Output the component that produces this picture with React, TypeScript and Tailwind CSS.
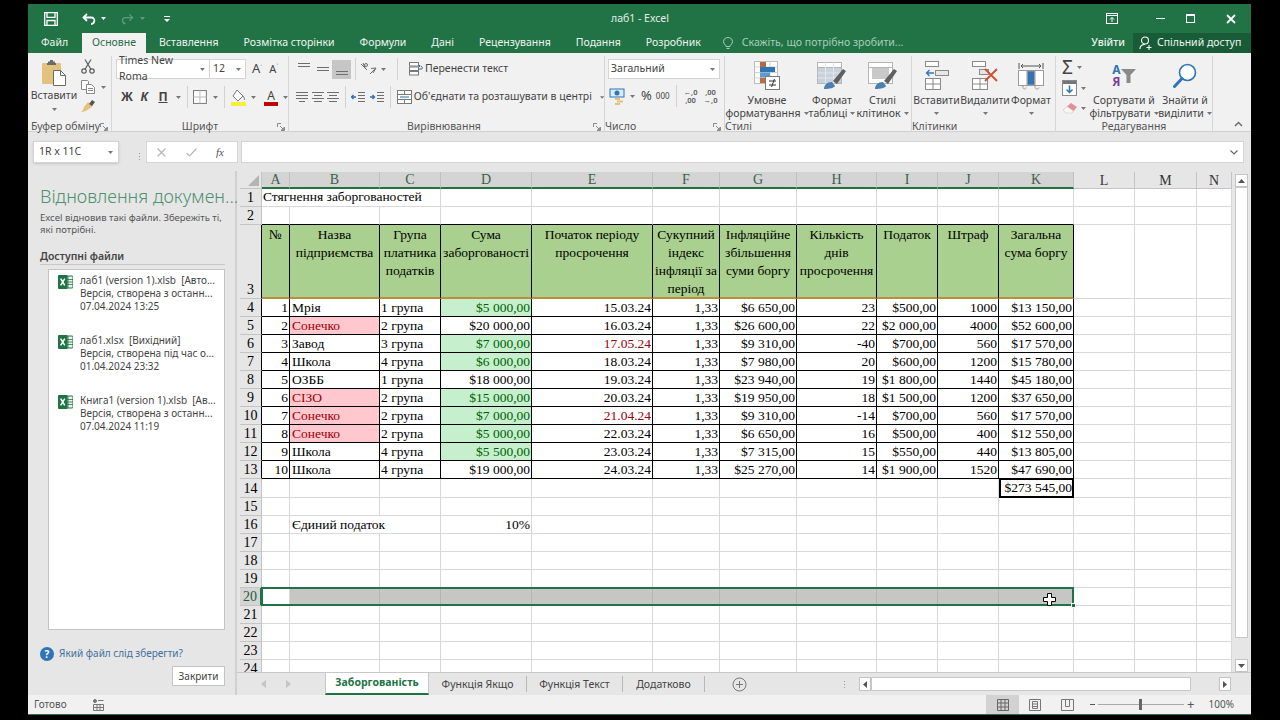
import type { ReactNode } from "react";

const ui = "font-['Noto_Sans',sans-serif]";
const serif = "font-['Liberation_Serif',serif]";

const Caret = ({ className = "" }: { className?: string }) => (
  <svg width="5" height="3" viewBox="0 0 5 3" className={className}>
    <path d="M0 0h5L2.5 3z" fill="#777" />
  </svg>
);

const Launcher = () => (
  <svg width="8" height="8" viewBox="0 0 8 8" fill="none" stroke="#8a8a8a">
    <path d="M.5 4V.5H4M7.5 4v3.5H4M3 3l3.5 3.5M6.5 4.5v2h-2" />
  </svg>
);

const Sep = ({ h = "h-[22px]", mx = "mx-0" }: { h?: string; mx?: string }) => <div className={`w-px bg-[#d2d2d2] ${h} ${mx}`} />;

function Lines({ rows }: { rows: [number, number, string?][] }) {
  return (
    <svg width="14" height="14" viewBox="0 0 14 14" fill="none" strokeWidth="1">
      {rows.map(([y, x, c], i) => (
        <path key={i} d={`M${x} ${y + 0.5}H${14 - (c === "r" ? 0 : x)}`} stroke="#6e6e6e" />
      ))}
    </svg>
  );
}

function ExcelIcon() {
  return (
    <svg width="15" height="14" viewBox="0 0 15 14">
      <rect x="5" y="1" width="10" height="12" rx="1" fill="#e8f3ec" stroke="#217346" />
      <path d="M10 1v12M5 4.5h10M5 7h10M5 9.5h10" stroke="#217346" strokeWidth=".8" />
      <rect x="0" y="0" width="9.5" height="14" rx="1" fill="#217346" />
      <path d="M2.6 3.6l4.2 6.8M6.8 3.6l-4.2 6.8" stroke="#fff" strokeWidth="1.5" />
    </svg>
  );
}

function Paste() {
  return (
    <svg width="25" height="26" viewBox="0 0 25 26">
      <rect x="0" y="3" width="19" height="21" rx="1" fill="#e3c27f" />
      <path d="M6 3V1.5h2V0h3v1.5h2V3h1v2H5V3z" fill="#6a6a6a" />
      <path d="M11.5 10.5h7l5 5v10h-12z" fill="#fff" stroke="#6a6a6a" />
      <path d="M18.5 10.5v5h5" fill="none" stroke="#6a6a6a" />
    </svg>
  );
}

function Scissors() {
  return (
    <svg width="14" height="15" viewBox="0 0 14 15" fill="none" stroke="#5c5c5c" strokeWidth="1.2">
      <circle cx="3" cy="12" r="2.2" />
      <circle cx="11" cy="12" r="2.2" />
      <path d="M4.2 10L10 .5M9.8 10L4 .5" />
    </svg>
  );
}

function CopyIcon() {
  return (
    <svg width="14" height="14" viewBox="0 0 14 14" fill="#fff" stroke="#8a8a8a">
      <path d="M.5.5h6l1 1v8h-7z" />
      <path d="M5.5 4.5h5l3 3v6h-8z" />
      <path d="M7 8.5h5M7 10.5h5" />
    </svg>
  );
}

function Brush() {
  return (
    <svg width="14" height="13" viewBox="0 0 14 13">
      <path d="M7 2l5 4-4 3-1 .5C5 11 2 12.500 0 12c2-1 2-3 3-5z" fill="#e3c27f" />
      <path d="M8 4l3-4 3 2-3 4z" fill="#555" />
    </svg>
  );
}

function FillBucket() {
  return (
    <svg width="16" height="17" viewBox="0 0 16 17">
      <path d="M6 1l6 6-5 5-5-5z" fill="#fff" stroke="#777" />
      <path d="M12 7c1 1.500 2 3 1.500 4" stroke="#777" fill="none" />
      <rect x="0" y="13" width="15" height="4" fill="#f5ee3a" />
    </svg>
  );
}

function Orientation() {
  return (
    <svg width="17" height="14" viewBox="0 0 17 14" fill="none" stroke="#6e6e6e">
      <path d="M1 2l6 6M3 1l2 5M10 12l6-6M13 11l3-5-5 .5" />
      <circle cx="6" cy="3" r="1.500" />
    </svg>
  );
}

function WrapIcon() {
  return (
    <svg width="14" height="14" viewBox="0 0 14 14" fill="#fff" stroke="#7a7a7a">
      <rect x=".5" y=".5" width="9" height="3.500" />
      <rect x=".5" y="5" width="9" height="3.500" />
      <rect x=".5" y="9.500" width="9" height="3.500" />
      <path d="M9 7h3.500c1.500 0 1-3 -1-3M11 3l-1 1 1 1" stroke="#2a6fa8" fill="none" />
    </svg>
  );
}

function MergeIcon() {
  return (
    <svg width="15" height="14" viewBox="0 0 15 14" fill="#fff" stroke="#7a7a7a">
      <rect x=".5" y=".5" width="14" height="13" />
      <path d="M.5 4.500h14M.5 9.500h14M7.500.5v4M7.500 9.500v4" />
      <path d="M3 7h9" stroke="#2a6fa8" />
    </svg>
  );
}

function Indent({ flip = false }: { flip?: boolean }) {
  return (
    <svg width="14" height="13" viewBox="0 0 14 13" fill="none" stroke="#6e6e6e">
      <path d="M7 1.500h7M7 4.500h7M7 7.500h7M7 10.500h7" />
      <path d={flip ? "M0 6h4M2.500 4l2 2-2 2" : "M5 6H1M2.500 4l-2 2 2 2"} stroke="#2a6fa8" strokeWidth="1.300" />
    </svg>
  );
}

function Currency() {
  return (
    <svg width="17" height="17" viewBox="0 0 17 17">
      <rect x="1" y="1" width="14" height="8" fill="#dcecf7" stroke="#2f75b5" />
      <circle cx="8" cy="5" r="2.500" fill="#2f75b5" />
      <rect x="6" y="10" width="5" height="2" fill="#e3c27f" />
      <rect x="8" y="12.500" width="6" height="2" fill="#e3c27f" />
      <rect x="6" y="15" width="5" height="2" fill="#e3c27f" />
    </svg>
  );
}

function CondFormat() {
  return (
    <svg width="26" height="29" viewBox="0 0 26 29">
      <rect x=".5" y=".5" width="23" height="22" fill="#fff" stroke="#bcbcbc" />
      <path d="M.5 6h23M.5 11.500h23M.5 17h23M8 .5v22M16 .5v22" stroke="#d0d0d0" />
      <rect x="6" y="1" width="6" height="5" fill="#b9663d" />
      <rect x="6" y="6" width="15" height="5" fill="#2f75b5" />
      <rect x="6" y="11.500" width="10" height="5" fill="#5d9ad2" />
      <rect x="6" y="17" width="5" height="5" fill="#c4693b" />
      <rect x="11.500" y="15.500" width="14" height="13" fill="#fff" stroke="#7a7a7a" />
      <path d="M15 20h7M15 24h7M20.500 18l-3 8" stroke="#333" />
    </svg>
  );
}

function Roller({ full }: { full: boolean }) {
  return (
    <svg width="30" height="28" viewBox="0 0 30 28">
      <rect x=".5" y=".5" width="24" height="21" fill="#fff" stroke="#b5b5b5" />
      <path d="M.5 5.500h24" stroke="#b5b5b5" />
      {full ? (
        <>
          <rect x="1" y="6" width="23" height="15" fill="#c8d2de" />
          <path d="M.5 11h24M.5 16h24M8.500.5v21M16.500.5v21" stroke="#e6e6e6" />
        </>
      ) : (
        <rect x="4" y="6" width="17" height="11" fill="#c9c9c9" />
      )}
      <path d="M7 27c0-4 3-7 8-7l3 4c-1 2-5 3-11 3z" fill="#4a7fb2" />
      <path d="M16 19L26 7l3 2-9 13z" fill="#5f5f5f" />
    </svg>
  );
}

function InsertCells() {
  return (
    <svg width="24" height="29" viewBox="0 0 24 29" fill="#fff" stroke="#8a8a8a">
      <rect x=".5" y=".5" width="13" height="5" />
      <rect x="10.500" y="9.500" width="13" height="5" fill="#e6e6e6" />
      <path d="M9 12H1.500M4.500 9l-3 3 3 3" fill="none" stroke="#2f75b5" strokeWidth="1.300" />
      <rect x=".5" y="17.500" width="15" height="11" />
      <path d="M.5 23h15M8 17.500v11" />
    </svg>
  );
}

function DeleteCells() {
  return (
    <svg width="26" height="29" viewBox="0 0 26 29" fill="#fff" stroke="#8a8a8a">
      <rect x=".5" y=".5" width="13" height="5" />
      <rect x="7.500" y="8.500" width="9" height="5" fill="#e6e6e6" />
      <rect x=".5" y="17.500" width="15" height="11" />
      <path d="M.5 23h15M8 17.500v11" />
      <path d="M13 8l12 12M25 8L13 20" stroke="#d0512c" strokeWidth="1.800" fill="none" />
    </svg>
  );
}

function FormatCells() {
  return (
    <svg width="26" height="28" viewBox="0 0 26 28" fill="none" stroke="#9a9a9a">
      <path d="M1 1v6M25 1v6M3 4h20M3 4l2-2M3 4l2 2M23 4l-2-2M23 4l-2 2" stroke="#555" />
      <rect x=".5" y="8.500" width="25" height="15" fill="#fff" />
      <path d="M9 8.500v15M17 8.500v15" />
      <rect x="9.500" y="9" width="7" height="14" fill="#2f75b5" />
      <path d="M5 23.500v2c0 2 3 2 3 0M17 23.500v2c0 2 4 2 4 0" />
    </svg>
  );
}

function FillDown() {
  return (
    <svg width="15" height="16" viewBox="0 0 15 16">
      <rect x=".5" y=".5" width="14" height="15" fill="#fff" stroke="#8a8a8a" />
      <rect x="1" y="1" width="13" height="3" fill="#767676" />
      <path d="M7.500 5.500v7M4.500 9.500l3 3 3-3" fill="none" stroke="#2f75b5" strokeWidth="1.500" />
    </svg>
  );
}

function Eraser() {
  return (
    <svg width="16" height="13" viewBox="0 0 16 13">
      <path d="M9 1l6 4-5 6H4L1 8z" fill="#e58f94" />
      <path d="M1 8l3 3h6l1.500-2L5 4.500z" fill="#f7f7f7" stroke="#c8c8c8" strokeWidth=".5" />
    </svg>
  );
}

function Funnel() {
  return (
    <svg width="15" height="14" viewBox="0 0 15 14">
      <path d="M0 0h15L9.500 6v8h-4V6z" fill="#8a8a8a" />
    </svg>
  );
}

function Magnifier() {
  return (
    <svg width="24" height="25" viewBox="0 0 24 25" fill="none">
      <circle cx="14.500" cy="9.500" r="8" fill="#fff" stroke="#2f75b5" strokeWidth="1.600" />
      <path d="M9 15.500l-7.500 8" stroke="#2f75b5" strokeWidth="3" strokeLinecap="round" />
    </svg>
  );
}

function BigButton({ w, icon, lines, caretInline = false, gap = "" }: { w: string; icon: ReactNode; lines: string[]; caretInline?: boolean; gap?: string }) {
  return (
    <div className={`flex flex-col items-center text-[10.5px] leading-[13px] text-[#444] ${w} ${gap}`}>
      <div className="flex h-[33px] items-center justify-center">{icon}</div>
      <div className="mt-[2px] whitespace-nowrap">{lines[0]}</div>
      {caretInline ? (
        <div className="flex items-center gap-[3px] whitespace-nowrap">
          {lines[1]}
          <Caret />
        </div>
      ) : (
        <Caret className="mt-[5px]" />
      )}
    </div>
  );
}

function Group({ w, label, launcher = false, labelCls = "justify-center", children }: { w: string; label: string; launcher?: boolean; labelCls?: string; children: ReactNode }) {
  return (
    <div className={`relative flex h-[76px] shrink-0 flex-col self-start border-r border-[#d6d6d6] ${w}`}>
      <div className="flex h-[64px] pt-[3px]">{children}</div>
      <div className={`flex items-center text-[10.5px] leading-[12px] text-[#555] ${labelCls}`}>
        <span>{label}</span>
      </div>
      {launcher && (
        <div className="absolute right-[3px] bottom-[1px]">
          <Launcher />
        </div>
      )}
    </div>
  );
}

function Ribbon() {
  return (
    <div className={`flex h-[79px] border-b border-[#d0d0d0] bg-[#f1f1f1] pt-[3px] ${ui}`}>
      <Group w="w-[84px]" label="Буфер обміну" launcher labelCls="pl-[3px]">
        <div className="flex w-[52px] flex-col items-center">
          <div className="mt-[1px]"><Paste /></div>
          <div className="mt-[3px] text-[10.5px] leading-[13px] text-[#444]">Вставити</div>
          <Caret className="mt-[6px]" />
        </div>
        <div className="flex flex-col gap-[6px] pl-[1px]">
          <Scissors />
          <div className="flex items-center gap-[6px]"><CopyIcon /><Caret /></div>
          <Brush />
        </div>
      </Group>

      <Group w="w-[177px]" label="Шрифт" launcher>
        <div className="flex w-full flex-col pl-[4px]">
          <div className="flex h-[20px] items-center">
            <div className="flex h-[20px] w-[94px] items-center justify-between border border-[#d4d4d4] bg-white pl-[2px] pr-[4px] text-[10.5px] text-[#444]">
              Times New Roma <Caret />
            </div>
            <div className="flex h-[20px] w-[36px] items-center justify-between border border-l-0 border-[#d4d4d4] bg-white pl-[3px] pr-[4px] text-[10.5px] text-[#444]">
              12 <Caret />
            </div>
            <span className={`ml-[6px] text-[13px] text-[#444] ${ui}`}>A<sup className="text-[7px] text-[#2f75b5]">˄</sup></span>
            <span className={`ml-[7px] text-[11px] text-[#444] ${ui}`}>A<sup className="text-[7px] text-[#2f75b5]">˅</sup></span>
          </div>
          <div className="mt-[9px] flex h-[18px] items-center text-[12px] font-bold text-[#444]">
            <span className="w-[19px] pl-[3px] text-center">Ж</span>
            <span className="w-[19px] text-center italic">К</span>
            <span className="w-[19px] text-center underline">П</span>
            <Caret className="ml-[4px]" />
            <Sep mx="ml-[6px]" />
            <svg width="14" height="14" viewBox="0 0 14 14" fill="#fff" stroke="#777" className="ml-[5px]">
              <rect x=".5" y=".5" width="13" height="13" />
              <path d="M7 .5v13M.5 7h13" stroke="#bbb" />
            </svg>
            <Caret className="ml-[6px]" />
            <Sep mx="ml-[6px]" />
            <div className="ml-[6px]"><FillBucket /></div>
            <Caret className="ml-[4px]" />
            <div className="ml-[8px] flex w-[14px] flex-col items-center">
              <span className="text-[12px] font-normal leading-[13px] underline-none">A</span>
              <span className="h-[4px] w-[14px] bg-[#c00000]" />
            </div>
            <Caret className="ml-[5px]" />
          </div>
        </div>
      </Group>

      <Group w="w-[316px]" label="Вирівнювання" launcher labelCls="pl-[118px]">
        <div className="flex w-full flex-col pl-[5px] text-[10.5px] text-[#444]">
          <div className="flex h-[20px] items-center">
            <div className="flex w-[19px] justify-center"><Lines rows={[[1, 1], [4, 1]]} /></div>
            <div className="flex w-[19px] justify-center"><Lines rows={[[5, 1], [8, 1]]} /></div>
            <div className="flex h-[19px] w-[19px] items-center justify-center bg-[#c6c6c6]"><Lines rows={[[9, 1], [12, 1]]} /></div>
            <Sep mx="ml-[4px]" />
            <div className="ml-[4px]"><Orientation /></div>
            <Caret className="ml-[4px]" />
            <Sep mx="ml-[11px]" />
            <div className="ml-[11px]"><WrapIcon /></div>
            <span className="ml-[2px]">Перенести текст</span>
          </div>
          <div className="mt-[8px] flex h-[20px] items-center">
            <div className="flex w-[19px] justify-center"><Lines rows={[[2, 1], [5, 1], [8, 1], [11, 4]]} /></div>
            <div className="flex w-[19px] justify-center"><Lines rows={[[2, 1], [5, 3], [8, 1], [11, 3]]} /></div>
            <div className="flex w-[19px] justify-center"><Lines rows={[[2, 1], [5, 3], [8, 1], [11, 3]]} /></div>
            <Sep mx="ml-[4px]" />
            <div className="ml-[5px]"><Indent /></div>
            <div className="ml-[5px]"><Indent flip /></div>
            <Sep mx="ml-[6px]" />
            <div className="ml-[6px]"><MergeIcon /></div>
            <span className="ml-[2px] whitespace-nowrap">Об'єднати та розташувати в центрі</span>
            <Caret className="ml-[8px]" />
          </div>
        </div>
      </Group>

      <Group w="w-[120px]" label="Число" launcher labelCls="pr-[16px]">
        <div className="flex w-full flex-col pl-[3px] text-[#444]">
          <div className="flex h-[20px] w-[112px] items-center justify-between border border-[#d4d4d4] bg-white pl-[2px] pr-[4px] text-[10.5px]">
            Загальний <Caret />
          </div>
          <div className="mt-[7px] flex h-[20px] items-center">
            <div className="ml-[1px]"><Currency /></div>
            <Caret className="ml-[4px]" />
            <span className="ml-[6px] text-[13px]">%</span>
            <span className="ml-[4px] text-[8px]">000</span>
            <Sep mx="ml-[6px]" />
            <span className="ml-[4px] w-[20px] text-center text-[7.5px] font-semibold leading-[8px] text-[#555]">←,0<br />,00</span>
            <span className="w-[20px] text-center text-[7.5px] font-semibold leading-[8px] text-[#555]">,00<br />→,0</span>
          </div>
        </div>
      </Group>

      <Group w="w-[187px]" label="Стилі" labelCls="pr-[4px]">
        <BigButton w="w-[86px] -ml-[1px]" icon={<CondFormat />} lines={["Умовне", "форматування"]} caretInline />
        <BigButton w="w-[44px]" icon={<Roller full />} lines={["Формат", "таблиці"]} caretInline />
        <BigButton w="w-[57px]" icon={<Roller full={false} />} lines={["Стилі", "клітинок"]} caretInline />
      </Group>

      <Group w="w-[144px]" label="Клітинки" labelCls="pr-[0px]">
        <BigButton w="w-[49px]" icon={<InsertCells />} lines={["Вставити"]} />
        <BigButton w="w-[48px]" icon={<DeleteCells />} lines={["Видалити"]} />
        <BigButton w="w-[44px]" icon={<FormatCells />} lines={["Формат"]} />
      </Group>

      <Group w="w-[157px]" label="Редагування">
        <div className="flex w-[32px] flex-col items-start gap-[4px] pl-[6px]">
          <div className="flex h-[17px] items-center gap-[4px]"><span className="text-[19px] leading-[17px] text-[#444]">Σ</span><Caret /></div>
          <div className="flex h-[16px] items-center gap-[4px]"><FillDown /><Caret /></div>
          <div className="flex h-[16px] items-center gap-[3px]"><Eraser /><Caret /></div>
        </div>
        <BigButton
          w="w-[68px] ml-[2px]"
          icon={
            <div className="flex items-center">
              <div className="flex flex-col text-[12px] font-bold leading-[12px]">
                <span className="text-[#2f75b5]">A</span>
                <span className="text-[#7a3f98]">Я</span>
              </div>
              <Funnel />
            </div>
          }
          lines={["Сортувати й", "фільтрувати"]}
          caretInline
        />
        <BigButton w="w-[54px]" icon={<Magnifier />} lines={["Знайти й", "виділити"]} caretInline />
      </Group>

      <div className="flex flex-1 items-end justify-end pb-[4px] pr-[8px]">
        <svg width="9" height="6" viewBox="0 0 9 6" fill="none" stroke="#666" strokeWidth="1.400"><path d="M1 5l3.500-3.500L8 5" /></svg>
      </div>
    </div>
  );
}

function TitleBar() {
  return (
    <div className={`relative flex h-[29px] items-center bg-[#217346] text-white ${ui}`}>
      <svg width="14" height="14" viewBox="0 0 14 14" fill="none" stroke="#fff" strokeWidth="1.300" className="ml-[16px]">
        <path d="M.7.7h12.600v12.600H.7zM3 .7v4.600h8V.7M3 13.300V8.500h8v4.800" />
      </svg>
      <svg width="14" height="12" viewBox="0 0 14 12" fill="none" stroke="#fff" strokeWidth="1.800" className="ml-[24px]">
        <path d="M5 1L1.500 4.500 5 8M1.500 4.500H9c5 0 4 6.500 0 6.500" />
      </svg>
      <Caret className="ml-[5px] [&>path]:fill-white" />
      <svg width="13" height="12" viewBox="0 0 14 12" fill="none" stroke="#5e9c7c" strokeWidth="1.400" className="ml-[15px]">
        <path d="M9 1l3.500 3.500L9 8M12.500 4.500H5c-5 0-4 6.500 0 6.500" />
      </svg>
      <Caret className="ml-[6px] [&>path]:fill-[#5e9c7c]" />
      <svg width="6" height="6" viewBox="0 0 6 6" className="ml-[19px]" fill="#fff">
        <path d="M0 0h6v1H0zM0 3h6L3 6z" />
      </svg>
      <span className="absolute left-[583px] top-[8px] text-[10.5px] leading-[13px] text-[#e2efe8]">лаб1 - Excel</span>
      <div className="ml-auto flex items-center">
        <svg width="12" height="11" viewBox="0 0 12 11" fill="none" stroke="#fff"><rect x=".5" y=".5" width="11" height="10" /><path d="M.5 2.500h11M6 9V4.500M4 6.500l2-2 2 2" /></svg>
        <span className="ml-[38px] h-[1.500px] w-[9px] bg-white" />
        <span className="ml-[21px] h-[9px] w-[9px] border border-t-2 border-white" />
        <svg width="10" height="10" viewBox="0 0 10 10" stroke="#fff" strokeWidth="1.800" className="ml-[31px] mr-[15px]"><path d="M1 1l8 8M9 1l-8 8" /></svg>
      </div>
    </div>
  );
}

function TabRow() {
  const tabs = ["Вставлення", "Розмітка сторінки", "Формули", "Дані", "Рецензування", "Подання", "Розробник"];
  return (
    <div className={`flex h-[20px] items-center bg-[#217346] text-[10.5px] text-[#eef5f0] ${ui}`}>
      <span className="w-[54px] pl-[13px]">Файл</span>
      <span className="flex h-[20px] w-[64px] items-center justify-center bg-[#f1f1f1] text-[#2b6c48]">Основне</span>
      <div className="ml-[13px] flex gap-[25px]">
        {tabs.map((t) => (
          <span key={t}>{t}</span>
        ))}
      </div>
      <svg width="10" height="13" viewBox="0 0 10 13" fill="none" stroke="#a8cdb8" className="ml-[22px]">
        <path d="M3 9.500C2.500 7.500.5 7 .5 4.500a4.500 4 0 0 1 9 0C9.500 7 7.500 7.500 7 9.500zM3.500 11.500h3" />
      </svg>
      <span className="ml-[9px] text-[#a8cdb8]">Скажіть, що потрібно зробити...</span>
      <span className="ml-auto font-medium">Увійти</span>
      <div className="ml-[8px] flex h-[20px] w-[118px] items-center bg-[#185c37] pl-[6px]">
        <svg width="15" height="14" viewBox="0 0 15 14" fill="none" stroke="#fff" strokeWidth="1.100">
          <circle cx="6" cy="4.500" r="3.500" />
          <path d="M1 13c0-3 2-4.500 5-4.500M10 9v5M7.500 11.500h5" />
        </svg>
        <span className="ml-[3px] whitespace-nowrap">Спільний доступ</span>
      </div>
    </div>
  );
}

function FormulaBar() {
  return (
    <div className={`flex h-[39px] bg-[#e6e6e6] pt-[9px] ${ui}`}>
      <div className="ml-[5px] flex h-[22px] w-[86px] items-center justify-between border border-[#d4d4d4] bg-white pl-[5px] pr-[5px] text-[10.5px] text-[#444] shadow-sm">
        1R x 11C <Caret />
      </div>
      <div className="ml-[13px] flex w-[14px] flex-col items-center justify-center gap-[2px]">
        <span className="h-px w-px bg-[#999]" />
        <span className="h-px w-px bg-[#999]" />
        <span className="h-px w-px bg-[#999]" />
      </div>
      <div className="flex h-[22px] w-[92px] items-center border border-[#d4d4d4] bg-white pl-[10px]">
        <svg width="9" height="9" viewBox="0 0 9 9" stroke="#b5b5b5" strokeWidth="1.100"><path d="M.5.5l8 8M8.500.5l-8 8" /></svg>
        <svg width="11" height="9" viewBox="0 0 11 9" stroke="#b5b5b5" strokeWidth="1.200" fill="none" className="ml-[20px]"><path d="M.5 5l3 3 7-7.500" /></svg>
        <span className={`ml-[19px] text-[11px] italic text-[#555] ${serif}`}>fx</span>
      </div>
      <div className="ml-[3px] flex h-[22px] w-[1003px] items-center justify-end border border-[#d4d4d4] bg-white pr-[5px]">
        <svg width="8" height="5" viewBox="0 0 8 5" fill="none" stroke="#666" strokeWidth="1.200"><path d="M.5.5L4 4 7.500.5" /></svg>
      </div>
    </div>
  );
}

const files = [
  ["лаб1 (version 1).xlsb  [Авто...", "Версія, створена з останн...", "07.04.2024 13:25"],
  ["лаб1.xlsx  [Вихідний]", "Версія, створена під час о...", "01.04.2024 23:32"],
  ["Книга1 (version 1).xlsb  [Ав...", "Версія, створена з останн...", "07.04.2024 11:19"],
];

function RecoveryPanel() {
  return (
    <div className={`flex w-[209px] shrink-0 flex-col border-r-2 border-[#d0d0d0] bg-[#e6e6e6] pl-[12px] pr-[10px] pt-[13px] ${ui}`}>
      <div className="whitespace-nowrap text-[18px] font-light leading-[24px] text-[#4f9070]">Відновлення докумен...</div>
      <div className="mt-[4px] text-[9.5px] leading-[12px] text-[#555]">Excel відновив такі файли.  Збережіть ті, які потрібні.</div>
      <div className="mt-[14px] border-b border-[#c8c8c8] pb-[1px] text-[10.5px] font-semibold leading-[13px] text-[#444]">Доступні файли</div>
      <div className="ml-[8px] mt-[4px] h-[361px] w-[177px] border border-[#c4c4c4] bg-white pt-[4px]">
        {files.map((f) => (
          <div key={f[0]} className="flex h-[60px] pl-[9px]">
            <div className="pt-[1px]"><ExcelIcon /></div>
            <div className="ml-[7px] whitespace-pre text-[10px] leading-[13px] text-[#444]">
              {f.map((l) => (
                <div key={l}>{l}</div>
              ))}
            </div>
          </div>
        ))}
      </div>
      <div className="mt-[16px] flex items-center">
        <span className="flex h-[14px] w-[14px] items-center justify-center rounded-full bg-[#2f75b5] text-[10px] font-bold leading-none text-white">?</span>
        <span className="ml-[5px] text-[10px] text-[#41719c]">Який файл слід зберегти?</span>
      </div>
      <div className="ml-auto mt-[5px] flex h-[20px] w-[53px] items-center justify-center border border-[#c4c4c4] bg-white text-[10px] text-[#444]">Закрити</div>
    </div>
  );
}

type Row = { n: string; name: string; bad?: boolean; group: string; sum: string; good?: boolean; date: string; late?: boolean; infl: string; days: string; tax: string; fine: string; total: string };

const data: Row[] = [
  { n: "1", name: "Мрія", group: "1 група", sum: "$5 000,00", good: true, date: "15.03.24", infl: "$6 650,00", days: "23", tax: "$500,00", fine: "1000", total: "$13 150,00" },
  { n: "2", name: "Сонечко", bad: true, group: "2 група", sum: "$20 000,00", date: "16.03.24", infl: "$26 600,00", days: "22", tax: "$2 000,00", fine: "4000", total: "$52 600,00" },
  { n: "3", name: "Завод", group: "3 група", sum: "$7 000,00", good: true, date: "17.05.24", late: true, infl: "$9 310,00", days: "-40", tax: "$700,00", fine: "560", total: "$17 570,00" },
  { n: "4", name: "Школа", group: "4 група", sum: "$6 000,00", good: true, date: "18.03.24", infl: "$7 980,00", days: "20", tax: "$600,00", fine: "1200", total: "$15 780,00" },
  { n: "5", name: "ОЗББ", group: "1 група", sum: "$18 000,00", date: "19.03.24", infl: "$23 940,00", days: "19", tax: "$1 800,00", fine: "1440", total: "$45 180,00" },
  { n: "6", name: "СІЗО", bad: true, group: "2 група", sum: "$15 000,00", good: true, date: "20.03.24", infl: "$19 950,00", days: "18", tax: "$1 500,00", fine: "1200", total: "$37 650,00" },
  { n: "7", name: "Сонечко", bad: true, group: "2 група", sum: "$7 000,00", good: true, date: "21.04.24", late: true, infl: "$9 310,00", days: "-14", tax: "$700,00", fine: "560", total: "$17 570,00" },
  { n: "8", name: "Сонечко", bad: true, group: "2 група", sum: "$5 000,00", good: true, date: "22.03.24", infl: "$6 650,00", days: "16", tax: "$500,00", fine: "400", total: "$12 550,00" },
  { n: "9", name: "Школа", group: "4 група", sum: "$5 500,00", good: true, date: "23.03.24", infl: "$7 315,00", days: "15", tax: "$550,00", fine: "440", total: "$13 805,00" },
  { n: "10", name: "Школа", group: "4 група", sum: "$19 000,00", date: "24.03.24", infl: "$25 270,00", days: "14", tax: "$1 900,00", fine: "1520", total: "$47 690,00" },
];

const heads = [
  "№",
  "Назва\nпідприємства",
  "Група\nплатника\nподатків",
  "Сума\nзаборгованості",
  "Початок періоду\nпросрочення",
  "Сукупний\nіндекс\nінфляції за\nперіод",
  "Інфляційне\nзбільшення\nсуми боргу",
  "Кількість\nднів\nпросрочення",
  "Податок",
  "Штраф",
  "Загальна\nсума боргу",
];

const letters = ["A", "B", "C", "D", "E", "F", "G", "H", "I", "J", "K", "L", "M", "N"];
const empty = "border-r border-b border-[#d8d8d8]";

function Blank({ row }: { row: number }) {
  const cells = [];
  for (let c = 0; c < 14; c++) {
    let cls = empty;
    let text: ReactNode = null;
    if (row === 1 && c < 2) cls = "border-b border-[#d8d8d8]";
    if (row === 1 && c === 0) text = <span className="pl-[1px] pb-[1px]">Стягнення заборгованостей</span>;
    if (row === 2 && c < 11) cls = "border-r border-b border-r-[#d8d8d8] border-b-black";
    if (row === 14 && c === 10) {
      cls = "border-2 border-black justify-end -mt-px";
      text = "$273 545,00";
    }
    if (row === 16 && c === 1) {
      cls = "border-b border-[#d8d8d8]";
      text = <span className="pl-[2px]">Єдиний податок</span>;
    }
    if (row === 16 && c === 2) cls = "border-b border-r border-[#d8d8d8]";
    if (row === 16 && c === 3) {
      cls = `${empty} justify-end pr-[1px]`;
      text = "10%";
    }
    if (row === 20 && c > 0 && c < 11) cls = "border-r border-b border-[#b4b4b2] bg-[#c6c6c4]";
    cells.push(
      <div key={c} className={`flex items-end whitespace-nowrap ${cls}`}>
        {text}
      </div>,
    );
  }
  return <>{cells}</>;
}

function DataCell({ v, cls = "justify-end pr-[1px]" }: { v: string; cls?: string }) {
  return <div className={`flex items-end whitespace-nowrap border-r border-b border-black ${cls}`}>{v}</div>;
}

function RowHead({ row }: { row: number }) {
  const dark = row >= 3 && row <= 13;
  const sel = row === 20;
  return (
    <div
      className={`flex items-end justify-center border-b border-[#c4c4c4] text-[14px] leading-[17px] ${
        dark ? "border-r border-r-black bg-[#e6e6e6]" : sel ? "border-r-2 border-r-[#217346] bg-[#d4d4d4] text-[#1d5c3a]" : "border-r border-r-[#c4c4c4] bg-[#e6e6e6]"
      }`}
    >
      {row}
    </div>
  );
}

function Sheet() {
  const rows = Array.from({ length: 24 }, (_, i) => i + 1);
  return (
    <div className={`relative h-[500px] w-[992px] overflow-hidden bg-white text-[13.5px] leading-[17px] text-black ${serif}`}>
      <div className="grid grid-cols-[22px_28px_90px_61px_91px_121px_67px_77px_80px_61px_61px_75px_61px_62px_35px] grid-rows-[17px_18px_18px_74px_repeat(10,18px)_19px_repeat(10,18px)]">
        <div className="flex items-end justify-end border-r border-b border-[#c4c4c4] bg-[#e6e6e6] p-[2px]">
          <svg width="11" height="11" viewBox="0 0 11 11"><path d="M11 0v11H0z" fill="#b4b4b4" /></svg>
        </div>
        {letters.map((l, i) => (
          <div
            key={l}
            className={`flex items-center justify-center border-r text-[14px] ${
              i < 11 ? "border-b-2 border-r-[#c0c0c0] border-b-[#217346] bg-[#d4d4d4] text-[#3d5f4c]" : "border-b border-r-[#c4c4c4] border-b-[#c4c4c4] bg-[#e6e6e6] text-[#333]"
            }`}
          >
            {l}
          </div>
        ))}
        {rows.map((r) => {
          if (r === 3) {
            return (
              <div key={r} className="contents">
                <RowHead row={r} />
                {heads.map((h) => (
                  <div key={h} className="whitespace-pre-line border-r border-b-2 border-r-black border-b-[#b98f3e] bg-[#a9d08e] pt-px text-center leading-[18px]">
                    {h}
                  </div>
                ))}
                <div className={empty} />
                <div className={empty} />
                <div className={empty} />
              </div>
            );
          }
          if (r >= 4 && r <= 13) {
            const d = data[r - 4];
            return (
              <div key={r} className="contents">
                <RowHead row={r} />
                <DataCell v={d.n} />
                <DataCell v={d.name} cls={`pl-[2px] ${d.bad ? "bg-[#ffc7ce] text-[#9c0006]" : ""}`} />
                <DataCell v={d.group} cls="pl-[1px]" />
                <DataCell v={d.sum} cls={`justify-end pr-[1px] ${d.good ? "bg-[#c6efce] text-[#006100]" : ""}`} />
                <DataCell v={d.date} cls={`justify-end pr-[1px] ${d.late ? "text-[#9c0006]" : ""}`} />
                <DataCell v="1,33" />
                <DataCell v={d.infl} />
                <DataCell v={d.days} />
                <DataCell v={d.tax} />
                <DataCell v={d.fine} />
                <DataCell v={d.total} />
                <div className={empty} />
                <div className={empty} />
                <div className={empty} />
              </div>
            );
          }
          return (
            <div key={r} className="contents">
              <RowHead row={r} />
              <Blank row={r} />
            </div>
          );
        })}
      </div>
      {/* selected range, row 20 */}
      <div className="absolute left-[21px] top-[415px] h-[19px] w-[813px] border-2 border-[#217346]" />
      <div className="absolute left-[831px] top-[431px] h-[5px] w-[5px] border border-white bg-[#217346]" />
      <svg width="13" height="13" viewBox="0 0 13 13" className="absolute left-[803px] top-[421px]">
        <path d="M4.500.5h4v4h4v4h-4v4h-4v-4h-4v-4h4z" fill="#fff" stroke="#000" />
      </svg>
    </div>
  );
}

function VScroll() {
  return (
    <div className="ml-[3px] flex h-[500px] w-[15px] flex-col bg-[#e6e6e6] pt-[2px]">
      <div className="flex h-[13px] w-[13px] items-center justify-center border border-[#c4c4c4] bg-white">
        <svg width="7" height="4" viewBox="0 0 7 4"><path d="M0 4h7L3.500 0z" fill="#555" /></svg>
      </div>
      <div className="h-[451px] w-[13px] border border-[#c8c8c8] bg-white" />
      <div className="mt-auto flex h-[13px] w-[13px] items-center justify-center border border-[#c4c4c4] bg-white">
        <svg width="7" height="4" viewBox="0 0 7 4"><path d="M0 0h7L3.500 4z" fill="#555" /></svg>
      </div>
    </div>
  );
}

function SheetTabs() {
  return (
    <div className={`flex h-[23px] items-center border-t border-[#c8c8c8] text-[10.5px] text-[#444] ${ui}`}>
      <svg width="5" height="8" viewBox="0 0 5 8" className="ml-[24px]"><path d="M5 0v8L0 4z" fill="#c4c4c4" /></svg>
      <svg width="5" height="8" viewBox="0 0 5 8" className="ml-[20px]"><path d="M0 0v8l5-4z" fill="#c4c4c4" /></svg>
      <div className="ml-[34px] flex h-[22px] w-[104px] items-center justify-center border-x border-b-2 border-x-[#c8c8c8] border-b-[#217346] bg-white font-bold text-[#217346]">Заборгованість</div>
      <span className="w-[98px] border-r border-[#b8b8b8] text-center leading-[16px]">Функція Якщо</span>
      <span className="w-[96px] border-r border-[#b8b8b8] text-center leading-[16px]">Функція Текст</span>
      <span className="w-[82px] border-r border-[#b8b8b8] text-center leading-[16px]">Додатково</span>
      <svg width="15" height="15" viewBox="0 0 15 15" fill="none" stroke="#777" className="ml-[27px]">
        <circle cx="7.500" cy="7.500" r="6.500" />
        <path d="M4 7.500h7M7.500 4v7" />
      </svg>
      <div className="ml-[97px] flex flex-col gap-[2px]">
        <span className="h-px w-px bg-[#999]" />
        <span className="h-px w-px bg-[#999]" />
        <span className="h-px w-px bg-[#999]" />
      </div>
      <div className="ml-[14px] flex h-[14px] w-[372px] items-center">
        <div className="flex h-[14px] w-[12px] items-center justify-center border border-[#c4c4c4] bg-white">
          <svg width="4" height="7" viewBox="0 0 4 7"><path d="M4 0v7L0 3.500z" fill="#555" /></svg>
        </div>
        <div className="h-[14px] w-[320px] border border-[#c8c8c8] bg-white" />
        <div className="ml-auto flex h-[14px] w-[12px] items-center justify-center border border-[#c4c4c4] bg-white">
          <svg width="4" height="7" viewBox="0 0 4 7"><path d="M0 0v7l4-3.500z" fill="#555" /></svg>
        </div>
      </div>
    </div>
  );
}

function StatusBar() {
  return (
    <div className={`flex h-[20px] items-center border-b border-[#217346] bg-[#f1f1f1] text-[10px] text-[#555] ${ui}`}>
      <span className="ml-[6px]">Готово</span>
      <svg width="11" height="12" viewBox="0 0 11 12" fill="none" stroke="#777" className="ml-[26px]">
        <circle cx="2" cy="2" r="1.500" fill="#777" />
        <path d="M5 1.500h5.500M.5 5.500h10v6H.5zM4 5.500v6M7 5.500v6M.5 8.500h10" />
      </svg>
      <div className="ml-auto flex h-[19px] items-center">
        <div className="flex h-[19px] w-[33px] items-center justify-center bg-[#d2d2d2]">
          <svg width="12" height="12" viewBox="0 0 12 12" fill="none" stroke="#666"><path d="M.5.5h11v11H.5zM4 .5v11M8 .5v11M.5 4h11M.5 8h11" /></svg>
        </div>
        <svg width="12" height="12" viewBox="0 0 12 12" fill="none" stroke="#777" className="ml-[10px]"><path d="M.5.5h11v11H.5zM3.500 2.500h5v7h-5zM3.500 5h5M3.500 7.500h5" /></svg>
        <svg width="13" height="12" viewBox="0 0 13 12" fill="none" stroke="#777" className="ml-[20px]"><path d="M.5.5h12v11H.5zM4.500.5v7h4v-7" /></svg>
        <span className="ml-[16px] h-px w-[5px] bg-[#555]" />
        <div className="relative ml-[3px] h-px w-[86px] bg-[#aaa]">
          <span className="absolute left-[41px] -top-[5px] h-[11px] w-[3px] bg-[#666]" />
        </div>
        <span className="ml-[3px] text-[13px] leading-none text-[#555]">+</span>
        <span className="ml-[14px] mr-[17px]">100%</span>
      </div>
    </div>
  );
}

export default function App() {
  return (
    <div className="h-[720px] w-[1280px] overflow-hidden bg-black pl-[28px] pt-[4px]">
      <div className="flex h-[711px] w-[1223px] flex-col bg-[#e6e6e6]">
        <TitleBar />
        <TabRow />
        <Ribbon />
        <FormulaBar />
        <div className="flex h-[524px]">
          <RecoveryPanel />
          <div className="flex flex-1 flex-col pt-[1px]">
            <div className="flex pl-[3px]">
              <Sheet />
              <VScroll />
            </div>
            <SheetTabs />
          </div>
        </div>
        <StatusBar />
      </div>
    </div>
  );
}
